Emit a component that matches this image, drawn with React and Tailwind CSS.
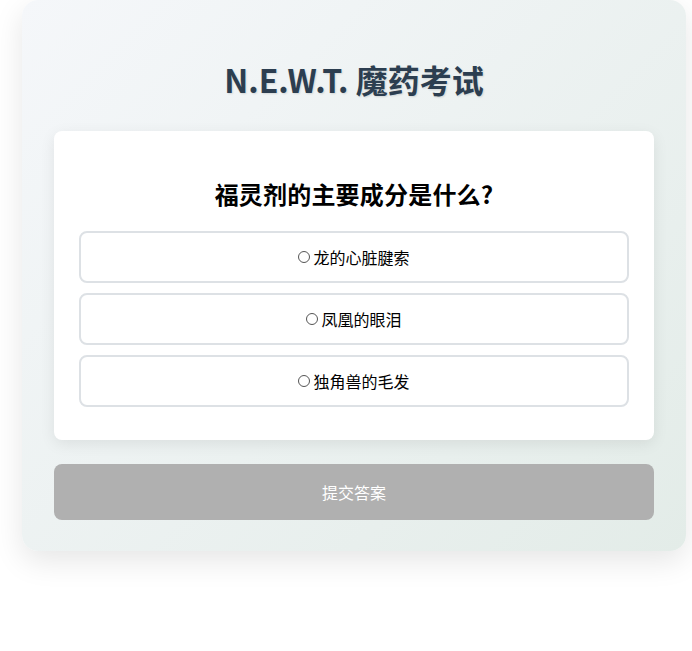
const options = ['龙的心脏腱索', '凤凰的眼泪', '独角兽的毛发'];

export default function App() {
  return (
    <div className="min-h-[651px] bg-white font-['Noto_Sans_CJK_SC',sans-serif]">
      <div className="ml-[22px] w-[664px] rounded-2xl bg-[linear-gradient(135deg,#f5f7fa_0%,#e3ece8_100%)] px-8 pt-[32px] pb-[31px] shadow-[0_10px_30px_rgba(0,0,0,0.1)]">
        <h1 className="mt-[23px] mb-[28px] text-center text-[32px] leading-[48px] font-bold text-[#2c3e50] [text-shadow:1px_1px_2px_rgba(0,0,0,0.12)]">
          N.E.W.T. 魔药考试
        </h1>

        <div className="rounded-lg bg-white px-[25px] pt-[25px] pb-[33px] shadow-[0_4px_15px_rgba(0,0,0,0.08)]">
          <h2 className="mt-[20px] mb-[19px] text-center text-[24px] leading-[36px] font-bold tracking-[0.2px] text-black">
            福灵剂的主要成分是什么?
          </h2>
          <div className="flex flex-col gap-[10px]">
            {options.map((o) => (
              <button
                key={o}
                type="button"
                className="flex h-[52px] items-center justify-center rounded-lg border-2 border-[#dde1e5] bg-white text-[16px] text-black"
              >
                <span className="mr-[3px] inline-block h-[12px] w-[12px] rounded-full border border-[#555]" />
                {o}
              </button>
            ))}
          </div>
        </div>

        <button
          type="button"
          className="mt-[24px] flex h-[56px] w-full items-center justify-center rounded-lg bg-[#b0b0b0] text-[16px] text-white"
        >
          提交答案
        </button>
      </div>
    </div>
  );
}
